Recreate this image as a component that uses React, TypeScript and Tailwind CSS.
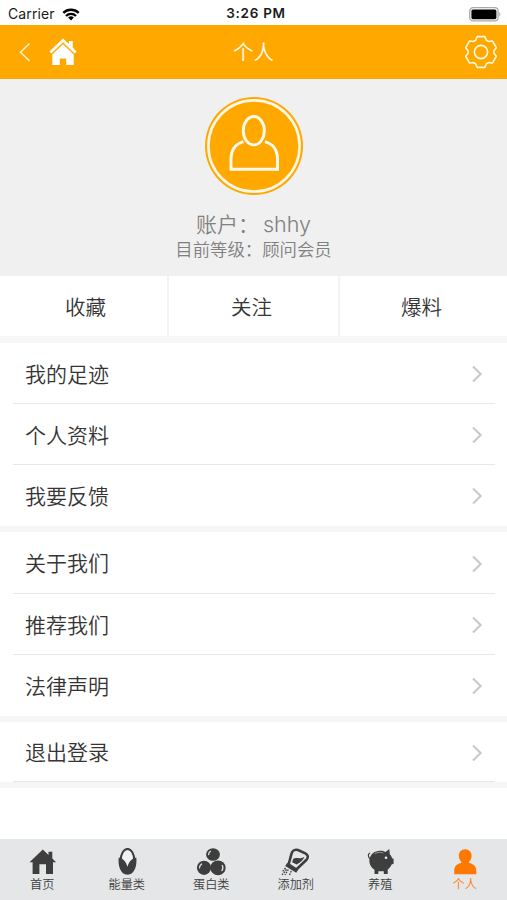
import type { ReactNode } from "react"
import clsx from "clsx"

const TABS = ["收藏", "关注", "爆料"]

const GROUPS = [
  ["我的足迹", "个人资料", "我要反馈"],
  ["关于我们", "推荐我们", "法律声明"],
]

// Six-toothed gear outline, centred on 0,0
const GEAR_POINTS = [0, 60, 120, 180, 240, 300]
  .flatMap((deg) => {
    const a = (deg * Math.PI) / 180
    const tooth = [
      [-5.4, -11.8],
      [-3.9, -15.4],
      [3.9, -15.4],
      [5.4, -11.8],
    ]
    return tooth.map(([x, y]) =>
      [
        (x * Math.cos(a) - y * Math.sin(a)).toFixed(2),
        (x * Math.sin(a) + y * Math.cos(a)).toFixed(2),
      ].join(",")
    )
  })
  .join(" ")

function StatusBar() {
  return (
    <div className="grid h-[25px] grid-cols-3 items-center bg-white pt-[3px] text-[#1a1a1a]">
      <div className="flex items-center gap-[7px] pl-2">
        <span className="text-[14px] leading-none tracking-[0.1px]">Carrier</span>
        <svg width="18" height="13" viewBox="0 0 18 13" fill="none" stroke="#000" strokeWidth="2.3">
          <path d="M1.3 4.9a11 11 0 0 1 15.4 0" />
          <path d="M4 8a7 7 0 0 1 10 0" />
          <path d="M9 12.4 6.1 9.6a4.2 4.2 0 0 1 5.8 0z" fill="#000" stroke="none" />
        </svg>
      </div>
      <span className="pl-[5px] text-center text-[13.5px] leading-none font-semibold tracking-[0.7px]">
        3:26 PM
      </span>
      <div className="flex justify-end pr-[6px]">
        <svg width="32" height="15" viewBox="0 0 32 15">
          <rect x="0.7" y="0.7" width="28.4" height="13.2" rx="3.4" fill="#fff" stroke="#aaa" strokeWidth="1.3" />
          <rect x="2.4" y="2.4" width="25" height="9.8" rx="1.6" fill="#000" />
          <path d="M30.3 5v4.600c1.400-.6 1.400-4 0-4.600z" fill="#aaa" />
        </svg>
      </div>
    </div>
  )
}

function Header() {
  return (
    <div className="grid h-[54px] grid-cols-3 items-center bg-[#ffa800] text-white">
      <div className="flex items-center gap-[18px] pl-[19px]">
        <svg width="12" height="20" viewBox="0 0 12 20" fill="none" stroke="#fff3d6" strokeWidth="1.4">
          <path d="M10.500 1.500 1.500 10.300l9 8.700" />
        </svg>
        <svg width="28" height="28" viewBox="0 0 28 28" fill="#fff">
          <path d="M14 .4 .4 13.400l2 2.100L14 4.300l11.600 11.200 2-2.100-3.800-3.600V2.900h-3.900v3.200z" />
          <path d="M14 6.200 3.300 16.500V27h7.500v-6.500h6.400V27h7.500V16.500z" />
        </svg>
      </div>
      <h1 className="pt-[3px] text-center text-[20.5px] leading-none font-[350]">个人</h1>
      <div className="flex justify-end pr-[9px]">
        <svg width="34" height="34" viewBox="-17 -17 34 34" fill="none" stroke="#fff8e2" strokeWidth="1.6" strokeLinejoin="round">
          <polygon points={GEAR_POINTS} />
          <circle r="6.600" />
        </svg>
      </div>
    </div>
  )
}

function Profile() {
  return (
    <div className="flex h-[197px] flex-col items-center bg-[#f0f0f0] pt-[18px] font-[350] text-[#808080]">
      <svg width="98" height="98" viewBox="0 0 98 98" fill="none">
        <circle cx="49" cy="49" r="49" fill="#ffa800" />
        <circle cx="49" cy="49" r="45.600" stroke="#fff8e8" strokeWidth="2.600" />
        <g stroke="#fffaf0" strokeWidth="2.900">
          <path d="M38.500 44.600C30 47 26 54 26 62.500v9.700h46.500v-9.700c0-8.500-4-15.500-12.500-17.900" />
          <ellipse cx="48.800" cy="33.700" rx="10.500" ry="14.200" />
        </g>
      </svg>
      <p className="mt-[18px] flex text-[21px] leading-[23px]">
        账户：<span className="pl-[4px] text-[21.5px]">shhy</span>
      </p>
      <p className="mt-[4px] text-[17.4px] leading-[20px]">目前等级：顾问会员</p>
    </div>
  )
}

function Row({ label, className }: { label: string; className?: string }) {
  return (
    <li className={clsx("bg-white pr-3 pl-[13px]", className)}>
      <div className="flex h-full items-center justify-between border-b border-[#e8e8e8] pt-[2px] pr-3 pl-3">
        <span className="text-[21px] leading-none font-[350] text-[#353535]">{label}</span>
        <svg width="11" height="18" viewBox="0 0 11 18" fill="none" stroke="#c7c7cc" strokeWidth="2">
          <path d="m1 1.500 7.700 7.500-7.700 7.500" />
        </svg>
      </div>
    </li>
  )
}

const NAV: { label: string; active?: boolean; icon: ReactNode }[] = [
  {
    label: "首页",
    icon: <path d="M15.800 1.500 2.500 14.300h3.100v11.800h6.800v-9.900h6.600v9.900h7V14.300h3.100L25.300 10.500V3.800h-3.800v3.100z" />,
  },
  {
    label: "能量类",
    icon: (
      <>
        <ellipse cx="15.500" cy="12.500" rx="6.800" ry="11.600" fill="#f1f2f2" stroke="#3e3e3e" strokeWidth="2" />
        <path d="M6.700 9.500c4.400.8 7.300 4 8.800 9.300 1.400-5.300 4.400-8.500 8.800-9.300.9 8-1.600 17.200-8.800 17.200S5.800 17.500 6.700 9.500z" />
      </>
    ),
  },
  {
    label: "蛋白类",
    icon: (
      <>
        <ellipse cx="17" cy="6.500" rx="6.900" ry="6.300" />
        <circle cx="8" cy="19.800" r="7.100" />
        <ellipse cx="22" cy="19.800" rx="7.700" ry="7.400" />
        <g fill="none" stroke="#e3e5e6" strokeWidth="1.300" strokeLinecap="round">
          <path d="M12.600 6.500c.1-1.800.8-2.700 1.900-3.300M3.500 19.800c.1-1.900.9-3 2.100-3.800M26.300 17.500c.8 1.500.7 3.600-.4 5" />
        </g>
      </>
    ),
  },
  {
    label: "添加剂",
    icon: (
      <>
        <path
          d="M7.600 16.500 10.500 5.600C11.300 2.600 14 1.200 17 2l7.300 3.300c2.900 1.500 3.300 4.300 1.200 6.500L15.300 21.500z"
          fill="none"
          stroke="#3e3e3e"
          strokeWidth="2.600"
        />
        <path d="M12.300 10.800c3.200-1.800 6 .8 11-1.800-1 2.700-3.500 5.400-7.600 7.600l-4.600-2.400z" />
        <path d="m6.300 14.800 11 6.600-2.100 3.300-11-6.600z" />
        <path
          d="M4.500 20 1.500 23.500M7.300 21.500 4 27M10.300 23 8.300 27.500M5.500 21.500 1 27"
          stroke="#3e3e3e"
          strokeWidth="1.300"
          strokeDasharray="1.600 1.100"
        />
      </>
    ),
  },
  {
    label: "养殖",
    icon: (
      <>
        <path d="M7.500 5.500C11 2.300 17 1.900 20.500 4.100L24.300 1l.5 5.200c1.300 1.200 1.900 2.500 2.200 4l1.600.6v5l-2 .7c-.8 2.200-2.200 3.800-3.900 5V26h-3.900v-2.800h-5.500V26H9.500v-4.300C3.600 18 2.500 10.500 7.500 5.500z" />
        <path d="M5.500 11C2.800 9.500 2.600 6 5 5" fill="none" stroke="#3e3e3e" strokeWidth="1.200" />
        <path d="M9.500 5.700c3.300-1.500 6-1.700 8.800-.7" fill="none" stroke="#b9bbbc" strokeWidth=".7" />
        <circle cx="21" cy="9.700" r="1.300" fill="#f1f2f2" />
      </>
    ),
  },
  {
    label: "个人",
    active: true,
    icon: (
      <path d="M15.200 1.200c4 0 6.600 3.200 6.400 6.800-.1 2.400-1.100 4.600-2.600 6v.9c4.700.6 7.300 3.600 7.300 7.800v3.500H4.200v-3.500c0-4.200 2.500-7.200 7.200-7.800V14c-1.500-1.400-2.500-3.600-2.600-6-.2-3.600 2.400-6.800 6.400-6.800z" />
    ),
  },
]

function BottomNav() {
  return (
    <nav className="mt-auto grid h-[61px] grid-cols-6 bg-[#e4e6e7]">
      {NAV.map(({ label, active, icon }) => (
        <div
          key={label}
          className={clsx(
            "flex flex-col items-center pt-[9px]",
            active ? "text-[#ff7800]" : "text-[#3e3e3e]"
          )}
        >
          <svg width="30" height="28" viewBox="0 0 30 28" fill="currentColor">
            {icon}
          </svg>
          <span className="mt-[2px] text-[12.2px] leading-[14px] font-[350]">{label}</span>
        </div>
      ))}
    </nav>
  )
}

export default function App() {
  return (
    <div className="flex h-[900px] w-[507px] flex-col overflow-hidden bg-white font-[Inter,'Noto_Sans_CJK_SC',sans-serif]">
      <StatusBar />
      <Header />
      <Profile />

      <div className="grid h-[60px] grid-cols-[169px_171px_167px]">
        {TABS.map((tab) => (
          <div
            key={tab}
            className="flex items-center justify-center border-r-2 border-[#f3f3f3] pt-[5px] text-[20.5px] leading-none font-[350] text-[#353535] first:pl-1 last:border-r-0 last:pr-1 even:pr-1"
          >
            {tab}
          </div>
        ))}
      </div>
      <div className="h-[7px] bg-[#f7f7f7]" />

      {GROUPS.map((rows, g) => (
        <ul key={rows[0]} className="border-b-[6px] border-[#f6f6f6]">
          {rows.map((label, i) => (
            <Row
              key={label}
              label={label}
              className={clsx(
                g === 1 && i === 0 ? "h-[62px]" : "h-[61px]",
                i === rows.length - 1 && "[&>div]:border-transparent"
              )}
            />
          ))}
        </ul>
      ))}
      <ul className="border-b-[6px] border-[#f6f6f6]">
        <Row label="退出登录" className="h-[60px]" />
      </ul>

      <BottomNav />
    </div>
  )
}
